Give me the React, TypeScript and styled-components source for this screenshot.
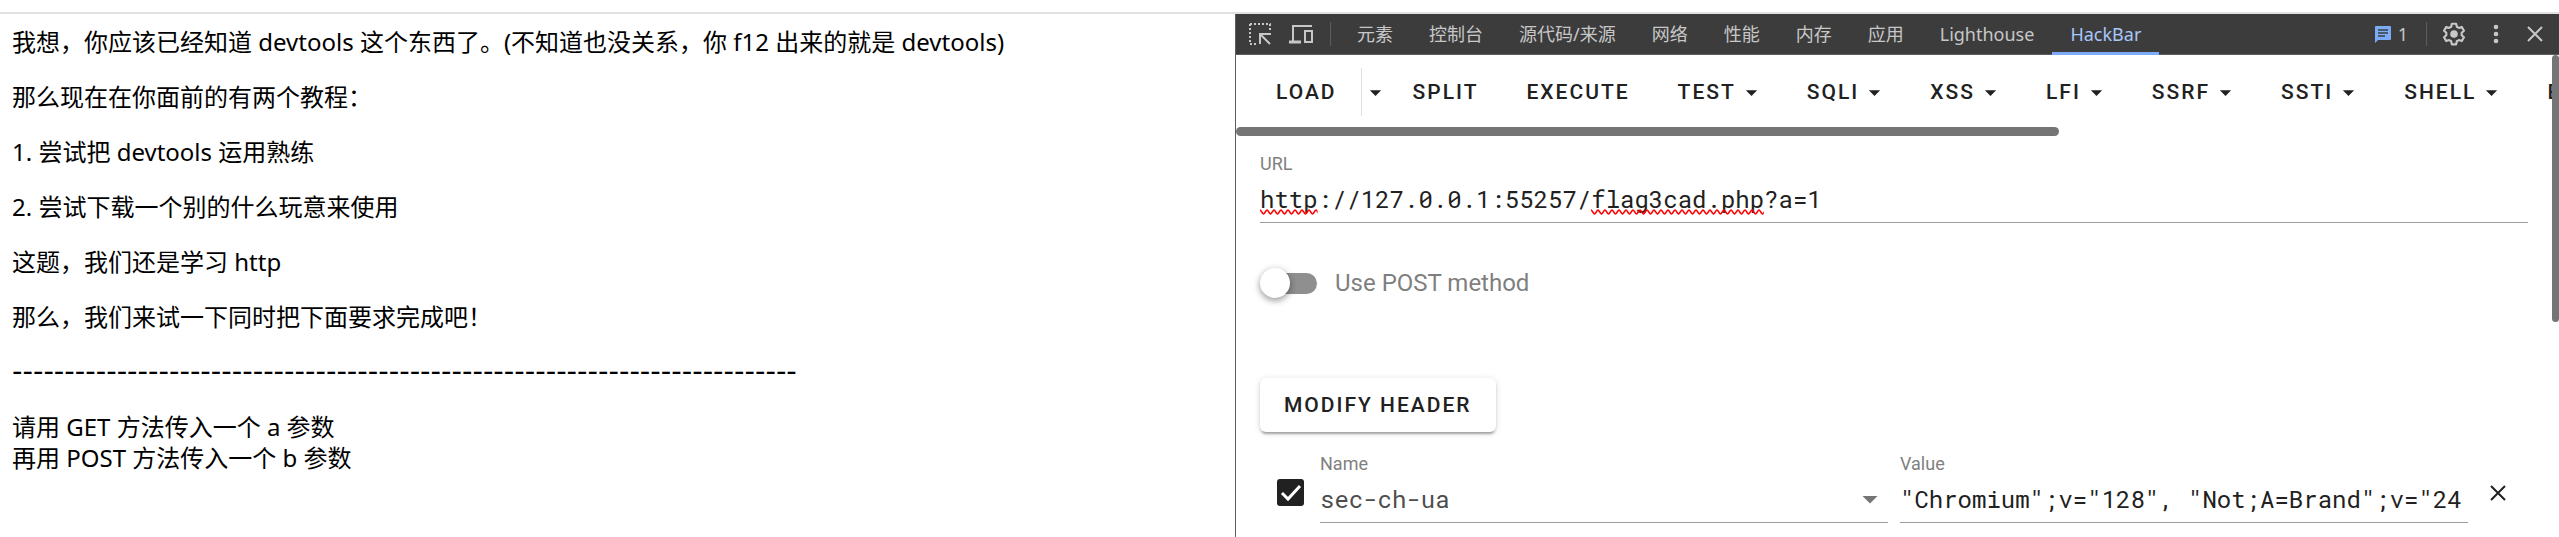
import React, { useState } from 'react';
import styled, { createGlobalStyle } from 'styled-components';

const GlobalStyle = createGlobalStyle`
  *, *::before, *::after { box-sizing: border-box; }
  body { margin: 0; background: #fff; overflow: hidden; }
  button, input, select { font: inherit; color: inherit; margin: 0; }
`;

const uiFont = `'Noto Sans', 'Noto Sans CJK SC', sans-serif`;
const appFont = `Roboto, 'Noto Sans CJK SC', sans-serif`;
const monoFont = `'Roboto Mono', 'DejaVu Sans Mono', monospace`;

const Browser = styled.div`
  display: flex;
  flex-direction: column;
  height: 100vh;
`;

const BrowserEdge = styled.div`
  flex: none;
  height: 14px;
  border-bottom: 2px solid #e1e1e1;
`;

const Split = styled.div`
  flex: 1;
  min-height: 0;
  display: grid;
  grid-template-columns: minmax(0, 1235fr) minmax(0, 1324fr);
`;

const Page = styled.main`
  padding: 12px;
  font: 24px/31px ${uiFont};
  color: #000;
  p { margin: 0 0 24px; }
`;

const Dashes = styled.p`
  font-family: 'DejaVu Sans', sans-serif;
  font-size: 29px;
  white-space: nowrap;
`;

const DevTools = styled.section`
  display: flex;
  flex-direction: column;
  min-height: 0;
  border-left: 1px solid #5e5e5e;
`;

const TabBar = styled.nav`
  flex: none;
  display: flex;
  align-items: center;
  height: 41px;
  padding-left: 12px;
  background: #3c3c3c;
  border-bottom: 1px solid #5e5e5e;
  color: #c7c7c7;
  font: 18px/24px ${uiFont};
`;

const ToolButton = styled.button<{ $width: number }>`
  display: grid;
  place-items: center;
  flex: none;
  width: ${(p) => p.$width}px;
  height: 30px;
  padding: 0;
  border: 0;
  background: none;
`;

const BarDivider = styled.span`
  flex: none;
  width: 1px;
  height: 24px;
  background: #5e5e5e;
`;

const Tabs = styled.div`
  display: flex;
  align-self: stretch;
  flex: 1;
  margin-left: 8px;
`;

const Tab = styled.button<{ $active?: boolean }>`
  height: 41px;
  padding: 0 18px 2px;
  border: 0;
  background: none;
  white-space: nowrap;
  color: ${(p) => (p.$active ? '#a8c7fa' : '#c7c7c7')};
  box-shadow: ${(p) => (p.$active ? 'inset 0 -3px #7cacf8' : 'none')};
`;

const Issues = styled.button`
  display: flex;
  align-items: center;
  gap: 6px;
  margin-right: 18px;
  padding: 0;
  border: 0;
  background: none;
`;

const HackBar = styled.div`
  flex: 1;
  min-height: 0;
  display: flex;
  overflow: hidden;
  font: 24px/32px ${appFont};
  color: #212121;
`;

const HackContent = styled.div`
  flex: 1;
  min-width: 0;
`;

const ScrollRail = styled.div`
  flex: none;
  width: 7px;
`;

const VerticalThumb = styled.div`
  height: 267px;
  border-radius: 4px;
  background: #757575;
`;

const HorizontalThumb = styled.div`
  width: 62.5%;
  height: 9px;
  border-radius: 5px;
  background: #757575;
`;

const Toolbar = styled.div`
  display: flex;
  align-items: center;
  height: 72px;
  padding: 2px 0 0 16px;
  overflow: hidden;
`;

const Action = styled.button`
  flex: none;
  display: flex;
  align-items: center;
  height: 54px;
  padding: 0 24px;
  border: 0;
  background: none;
  font-size: 21px;
  font-weight: 500;
  letter-spacing: 2px;
  svg { margin: 0 -6px 0 2px; }
`;

const LoadMenu = styled.button`
  flex: none;
  display: grid;
  place-items: center;
  width: 28px;
  height: 48px;
  padding: 0;
  border: 0;
  border-left: 1px solid #e0e0e0;
  background: none;
`;

const Form = styled.form`
  padding: 18px 24px 0;
`;

const Field = styled.div`
  position: relative;
  flex: 1;
  min-width: 0;
  border-bottom: 1px solid #9e9e9e;
`;

const FieldLabel = styled.label`
  display: block;
  height: 20px;
  font-size: 18px;
  line-height: 20px;
  color: #7f7f7f;
`;

const TextInput = styled.input`
  display: block;
  width: 100%;
  height: 48px;
  padding: 2px 0 0;
  border: 0;
  outline: 0;
  background: none;
  font-family: ${monoFont};
  font-size: 24px;
`;

const NameSelect = styled.select`
  display: block;
  width: 100%;
  height: 48px;
  padding: 2px 0 0;
  border: 0;
  outline: 0;
  appearance: none;
  background: none;
  font-family: ${monoFont};
  font-size: 24px;
  color: #4d4d4d;
`;

const SelectCaret = styled.span`
  position: absolute;
  right: 0;
  bottom: 5px;
  display: flex;
  pointer-events: none;
`;

const Misspelling = styled.svg<{ $from: number; $chars: number }>`
  position: absolute;
  left: ${(p) => p.$from}ch;
  bottom: 7px;
  width: ${(p) => p.$chars}ch;
  height: 6px;
  font: 24px ${monoFont};
  pointer-events: none;
`;

const SwitchRow = styled.label`
  display: flex;
  align-items: center;
  gap: 18px;
  margin-top: 44px;
  color: #7f7f7f;
`;

const Switch = styled.input`
  appearance: none;
  position: relative;
  width: 57px;
  height: 32px;
  &::before {
    content: '';
    position: absolute;
    inset: 6px 0 5px 6px;
    border-radius: 11px;
    background: #8f8f8f;
  }
  &::after {
    content: '';
    position: absolute;
    left: ${(p) => (p.checked ? 27 : 0)}px;
    top: 1px;
    width: 30px;
    height: 30px;
    border-radius: 50%;
    background: #fff;
    box-shadow: 0 3px 6px rgba(0, 0, 0, 0.3), 0 1px 8px rgba(0, 0, 0, 0.14);
  }
`;

const ModifyButton = styled.button`
  display: block;
  height: 54px;
  margin-top: 79px;
  padding: 0 24px;
  border: 0;
  border-radius: 6px;
  background: #fff;
  font-size: 21px;
  font-weight: 500;
  letter-spacing: 2px;
  box-shadow: 0 4px 2px -2px rgba(0, 0, 0, 0.2), 0 2px 3px rgba(0, 0, 0, 0.14), 0 1px 7px rgba(0, 0, 0, 0.12);
`;

const HeaderRow = styled.div`
  display: flex;
  align-items: center;
  gap: 12px;
  margin-top: 22px;
`;

const CheckCell = styled.span`
  display: grid;
  place-items: center;
  flex: none;
  width: 48px;
  padding: 8px 0 0 12px;
`;

const CheckBox = styled.input`
  grid-area: 1 / 1;
  appearance: none;
  width: 27px;
  height: 27px;
  margin: 0;
  border-radius: 3px;
  border: 3px solid #212121;
  background: ${(p) => (p.checked ? '#212121' : '#fff')};
`;

const CheckMark = styled.svg`
  grid-area: 1 / 1;
  pointer-events: none;
`;

const RemoveButton = styled.button`
  display: grid;
  place-items: center;
  flex: none;
  width: 48px;
  height: 48px;
  padding: 8px 12px 0 0;
  border: 0;
  background: none;
`;

const Caret = ({ size = 27, color = '#212121' }: { size?: number; color?: string }) => (
  <svg width={size} height={size} viewBox="0 0 24 24" fill={color} aria-hidden="true">
    <path d="M7 10l5 5 5-5z" />
  </svg>
);

const Squiggle = ({ id, from, chars }: { id: string; from: number; chars: number }) => (
  <Misspelling $from={from} $chars={chars} aria-hidden="true">
    <defs>
      <pattern id={id} width="7" height="6" patternUnits="userSpaceOnUse">
        <path d="M-2 3L0 1C1 1 2.500 5 3.500 5S6 1 7 1L9 3" fill="none" stroke="#f00" strokeWidth="1.500" />
      </pattern>
    </defs>
    <rect width="100%" height="6" fill={`url(#${id})`} />
  </Misspelling>
);

const tabs = ['元素', '控制台', '源代码/来源', '网络', '性能', '内存', '应用', 'Lighthouse', 'HackBar'];
const menus = ['TEST', 'SQLI', 'XSS', 'LFI', 'SSRF', 'SSTI', 'SHELL', 'ENCODING'];

export default function App() {
  const [url, setUrl] = useState('http://127.0.0.1:55257/flag3cad.php?a=1');
  const [value, setValue] = useState('"Chromium";v="128", "Not;A=Brand";v="24');
  const [post, setPost] = useState(false);
  const [enabled, setEnabled] = useState(true);
  const [tab, setTab] = useState('HackBar');

  return (
    <>
      <GlobalStyle />
      <Browser>
        <BrowserEdge />
        <Split>
          <Page>
            <p>我想，你应该已经知道 devtools 这个东西了。(不知道也没关系，你 f12 出来的就是 devtools)</p>
            <p>那么现在在你面前的有两个教程：</p>
            <p>1. 尝试把 devtools 运用熟练</p>
            <p>2. 尝试下载一个别的什么玩意来使用</p>
            <p>这题，我们还是学习 http</p>
            <p>那么，我们来试一下同时把下面要求完成吧！</p>
            <Dashes>{'-'.repeat(75)}</Dashes>
            <p>
              请用 GET 方法传入一个 a 参数
              <br />
              再用 POST 方法传入一个 b 参数
            </p>
          </Page>
          <DevTools>
            <TabBar>
              <ToolButton $width={24} aria-label="选择元素">
                <svg width="24" height="24" viewBox="0 0 24 24" fill="none" stroke="#c7c7c7" strokeWidth="2">
                  <path d="M2 2h21M2 2v20M22 2v6M2 22h7" strokeDasharray="2 2" />
                  <path d="M12 22V12h11M12.500 12.500l9.500 9.500" />
                </svg>
              </ToolButton>
              <ToolButton $width={58} aria-label="设备工具栏">
                <svg width="26" height="24" viewBox="0 0 26 24" fill="none" stroke="#c7c7c7" strokeWidth="2">
                  <path d="M24 4H5v15" />
                  <path d="M1 20h12" strokeWidth="3" />
                  <rect x="17" y="9" width="7" height="11" />
                </svg>
              </ToolButton>
              <BarDivider />
              <Tabs role="tablist">
                {tabs.map((t) => (
                  <Tab key={t} role="tab" aria-selected={t === tab} $active={t === tab} onClick={() => setTab(t)}>
                    {t}
                  </Tab>
                ))}
              </Tabs>
              <Issues aria-label="1 个问题">
                <svg width="18" height="18" viewBox="0 0 18 18" aria-hidden="true">
                  <path d="M2 1h14a1 1 0 0 1 1 1v12a1 1 0 0 1-1 1H4l-3 3V2a1 1 0 0 1 1-1z" fill="#7cacf8" />
                  <path d="M4 5h10M4 8h10M4 11h7" stroke="#3c3c3c" strokeWidth="1.500" />
                </svg>
                1
              </Issues>
              <BarDivider />
              <ToolButton $width={54} aria-label="设置">
                <svg width="26" height="26" viewBox="0 0 24 24" fill="none" stroke="#c7c7c7" strokeWidth="2" strokeLinejoin="round">
                  <path d="M10 2.500h4l.6 2.800 1.900 1.100 2.700-.9 2 3.500-2.100 1.900v2.200l2.100 1.900-2 3.500-2.700-.9-1.900 1.100-.6 2.800h-4l-.6-2.800-1.900-1.100-2.700.9-2-3.500 2.100-1.900v-2.200L2.800 9l2-3.500 2.700.9 1.900-1.100z" />
                  <circle cx="12" cy="12" r="3.500" fill="#c7c7c7" stroke="none" />
                </svg>
              </ToolButton>
              <ToolButton $width={30} aria-label="更多选项">
                <svg width="6" height="20" viewBox="0 0 6 20" fill="#c7c7c7">
                  <circle cx="3" cy="3" r="2.300" />
                  <circle cx="3" cy="10" r="2.300" />
                  <circle cx="3" cy="17" r="2.300" />
                </svg>
              </ToolButton>
              <ToolButton $width={48} aria-label="关闭">
                <svg width="16" height="16" viewBox="0 0 16 16" stroke="#c7c7c7" strokeWidth="2">
                  <path d="M1 1l14 14M15 1L1 15" />
                </svg>
              </ToolButton>
            </TabBar>
            <HackBar>
              <HackContent>
                <Toolbar>
                  <Action>LOAD</Action>
                  <LoadMenu aria-label="LOAD menu">
                    <Caret />
                  </LoadMenu>
                  <Action>SPLIT</Action>
                  <Action>EXECUTE</Action>
                  {menus.map((m) => (
                    <Action key={m}>
                      {m}
                      <Caret />
                    </Action>
                  ))}
                </Toolbar>
                <HorizontalThumb />
                <Form onSubmit={(e) => e.preventDefault()}>
                  <Field>
                    <FieldLabel htmlFor="url">URL</FieldLabel>
                    <TextInput id="url" value={url} spellCheck={false} onChange={(e) => setUrl(e.target.value)} />
                    <Squiggle id="wave-scheme" from={0} chars={4} />
                    <Squiggle id="wave-path" from={23} chars={12} />
                  </Field>
                  <SwitchRow>
                    <Switch type="checkbox" role="switch" checked={post} onChange={(e) => setPost(e.target.checked)} />
                    Use POST method
                  </SwitchRow>
                  <ModifyButton type="button">MODIFY HEADER</ModifyButton>
                  <HeaderRow>
                    <CheckCell>
                      <CheckBox
                        type="checkbox"
                        aria-label="sec-ch-ua"
                        checked={enabled}
                        onChange={(e) => setEnabled(e.target.checked)}
                      />
                      <CheckMark width="27" height="27" viewBox="0 0 27 27" aria-hidden="true">
                        <path d="M5 14l6 6L23 7" fill="none" stroke="#fff" strokeWidth="3" />
                      </CheckMark>
                    </CheckCell>
                    <Field>
                      <FieldLabel htmlFor="name">Name</FieldLabel>
                      <NameSelect id="name" defaultValue="sec-ch-ua">
                        <option>sec-ch-ua</option>
                      </NameSelect>
                      <SelectCaret>
                        <Caret size={36} color="#757575" />
                      </SelectCaret>
                    </Field>
                    <Field>
                      <FieldLabel htmlFor="value">Value</FieldLabel>
                      <TextInput id="value" value={value} spellCheck={false} onChange={(e) => setValue(e.target.value)} />
                    </Field>
                    <RemoveButton type="button" aria-label="Remove header">
                      <svg width="16" height="16" viewBox="0 0 16 16" stroke="#212121" strokeWidth="2">
                        <path d="M1 1l14 14M15 1L1 15" />
                      </svg>
                    </RemoveButton>
                  </HeaderRow>
                </Form>
              </HackContent>
              <ScrollRail>
                <VerticalThumb />
              </ScrollRail>
            </HackBar>
          </DevTools>
        </Split>
      </Browser>
    </>
  );
}
